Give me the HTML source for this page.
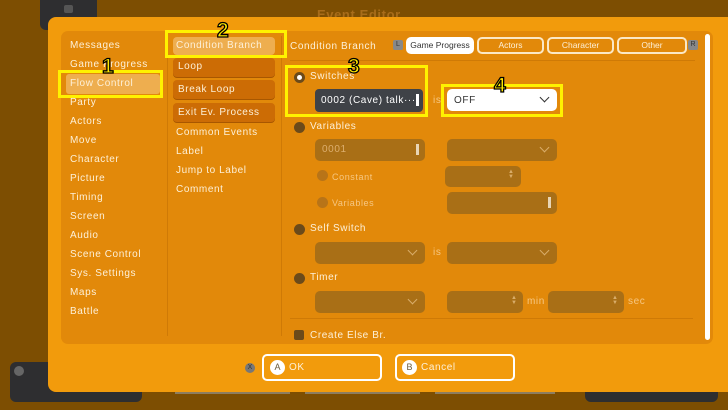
<!DOCTYPE html>
<html><head><meta charset="utf-8"><style>
*{margin:0;padding:0;box-sizing:border-box}
body{width:728px;height:410px;overflow:hidden;background:#7d4e02;font-family:"Liberation Sans",sans-serif;position:relative}
.a{position:absolute}
.t{position:absolute;color:#fdf0d8;font-size:10px;letter-spacing:0.6px;line-height:12px;white-space:nowrap}
.dim{color:#f6c783}
.f{position:absolute;background:#a96f16;border-radius:5px}
.y{position:absolute;border:3px solid #fff200}
.r{position:absolute;width:11px;height:11px;border-radius:50%;background:#6b4a1a}
.chev{position:absolute;width:7px;height:7px;border-right:1.5px solid #d9ad6a;border-bottom:1.5px solid #d9ad6a;transform:rotate(45deg)}
.num{position:absolute;font-weight:bold;font-size:21px;color:#ffe800;-webkit-text-stroke:1.3px #000;line-height:21px}
.tab{position:absolute;top:37px;height:17px;border:2px solid #fbe8c6;border-radius:5px;color:#fdf0d8;font-size:8.5px;text-align:center;line-height:13px}
.btn{position:absolute;border-radius:4px}
.sp{position:absolute;color:#d9ad6a;font-size:6px;line-height:5px}
</style></head><body>
<div class="a" style="left:40px;top:0;width:57px;height:30px;background:#2e2e30;border-radius:0 0 6px 6px"></div>
<div class="a" style="left:64px;top:5px;width:9px;height:8px;background:#555;border-radius:2px"></div>
<div class="a" style="left:10px;top:362px;width:132px;height:40px;background:#2e2e30;border-radius:6px"></div>
<div class="a" style="left:585px;top:362px;width:133px;height:40px;background:#2e2e30;border-radius:6px"></div>
<div class="a" style="left:14px;top:366px;width:10px;height:10px;border-radius:50%;background:#666"></div>
<div class="a" style="left:175px;top:392px;width:115px;height:2px;background:#8d7d60"></div>
<div class="a" style="left:305px;top:392px;width:115px;height:2px;background:#8d7d60"></div>
<div class="a" style="left:435px;top:392px;width:120px;height:2px;background:#8d7d60"></div>
<div class="t" style="left:317px;top:9px;font-size:13px;color:#a86c1a;font-weight:bold">Event Editor</div>
<!-- dialog -->
<div class="a" style="left:48px;top:17px;width:690px;height:375px;background:#f29b0c;border-radius:8px"></div>
<div class="a" style="left:61px;top:31px;width:652px;height:313px;background:#e2890a;border-radius:7px"></div>
<div class="a" style="left:167px;top:36px;width:1px;height:300px;background:#cf7a06"></div>
<div class="a" style="left:281px;top:36px;width:1px;height:300px;background:#cf7a06"></div>
<div class="a" style="left:705px;top:34px;width:5px;height:306px;background:#fff;border-radius:3px"></div>
<!-- left list -->
<div class="a" style="left:66px;top:74px;width:94px;height:20px;background:#eeae4f;border-radius:3px"></div>
<div class="t" style="left:70px;top:40px">Messages</div>
<div class="t" style="left:70px;top:59px">Game Progress</div>
<div class="t" style="left:70px;top:78px">Flow Control</div>
<div class="t" style="left:70px;top:97px">Party</div>
<div class="t" style="left:70px;top:116px">Actors</div>
<div class="t" style="left:70px;top:135px">Move</div>
<div class="t" style="left:70px;top:154px">Character</div>
<div class="t" style="left:70px;top:173px">Picture</div>
<div class="t" style="left:70px;top:192px">Timing</div>
<div class="t" style="left:70px;top:211px">Screen</div>
<div class="t" style="left:70px;top:230px">Audio</div>
<div class="t" style="left:70px;top:249px">Scene Control</div>
<div class="t" style="left:70px;top:268px">Sys. Settings</div>
<div class="t" style="left:70px;top:287px">Maps</div>
<div class="t" style="left:70px;top:306px">Battle</div>
<!-- middle -->
<div class="a" style="left:173px;top:37px;width:102px;height:18px;background:#eeae4f;border-radius:4px"></div>
<div class="btn" style="left:173px;top:58px;width:102px;height:19px;background:#cc6c05;box-shadow:0 1px 0 #a85700"></div>
<div class="btn" style="left:173px;top:80px;width:102px;height:19px;background:#cc6c05;box-shadow:0 1px 0 #a85700"></div>
<div class="btn" style="left:173px;top:103px;width:102px;height:19px;background:#cc6c05;box-shadow:0 1px 0 #a85700"></div>
<div class="t" style="left:176px;top:40px">Condition Branch</div>
<div class="t" style="left:178px;top:61px">Loop</div>
<div class="t" style="left:178px;top:84px">Break Loop</div>
<div class="t" style="left:178px;top:107px">Exit Ev. Process</div>
<div class="t" style="left:176px;top:127px">Common Events</div>
<div class="t" style="left:176px;top:146px">Label</div>
<div class="t" style="left:176px;top:165px">Jump to Label</div>
<div class="t" style="left:176px;top:184px">Comment</div>
<!-- right header -->
<div class="t" style="left:290px;top:41px">Condition Branch</div>
<div class="a" style="left:393px;top:40px;width:10px;height:10px;background:#888;border-radius:2px;color:#333;font-size:7px;text-align:center;line-height:10px">L</div>
<div class="a" style="left:406px;top:37px;width:68px;height:17px;background:#fff;border-radius:5px;color:#333;font-size:8.5px;text-align:center;line-height:17px">Game Progress</div>
<div class="tab" style="left:477px;width:67px">Actors</div>
<div class="tab" style="left:547px;width:67px">Character</div>
<div class="tab" style="left:617px;width:70px">Other</div>
<div class="a" style="left:688px;top:40px;width:10px;height:10px;background:#888;border-radius:2px;color:#333;font-size:7px;text-align:center;line-height:10px">R</div>
<div class="a" style="left:290px;top:60px;width:405px;height:1px;background:#cf7a06"></div>
<!-- switches -->
<div class="r" style="left:294px;top:72px;background:#6b4a1a"></div>
<div class="a" style="left:297px;top:75px;width:5px;height:5px;border-radius:50%;background:#fff"></div>
<div class="t" style="left:310px;top:71px">Switches</div>
<div class="a" style="left:315px;top:89px;width:108px;height:23px;background:#3f4247;border-radius:4px"></div>
<div class="t" style="left:321px;top:95px;color:#fff">0002 (Cave) talk···</div>
<div class="a" style="left:416px;top:94px;width:3px;height:12px;background:#fff"></div>
<div class="t" style="left:433px;top:95px;color:#f6c783">is</div>
<div class="a" style="left:447px;top:89px;width:110px;height:22px;background:#fff;border-radius:5px"></div>
<div class="t" style="left:454px;top:95px;color:#333">OFF</div>
<div class="chev" style="left:541px;top:94px;border-color:#333"></div>
<!-- variables -->
<div class="r" style="left:294px;top:122px"></div>
<div class="t" style="left:310px;top:121px">Variables</div>
<div class="f" style="left:315px;top:139px;width:110px;height:22px"></div>
<div class="t dim" style="left:322px;top:144px;color:#dcae6e">0001</div>
<div class="a" style="left:416px;top:144px;width:3px;height:11px;background:#e8d5b5"></div>
<div class="f" style="left:447px;top:139px;width:110px;height:22px"></div>
<div class="chev" style="left:541px;top:144px"></div>
<div class="r" style="left:317px;top:170px;background:#b87418"></div>
<div class="t dim" style="left:332px;top:171px;font-size:9px">Constant</div>
<div class="f" style="left:445px;top:166px;width:76px;height:21px"></div>
<div class="sp" style="left:508px;top:170px">▲<br>▼</div>
<div class="r" style="left:317px;top:197px;background:#b87418"></div>
<div class="t dim" style="left:332px;top:197px;font-size:9px">Variables</div>
<div class="f" style="left:447px;top:192px;width:110px;height:22px"></div>
<div class="a" style="left:548px;top:197px;width:3px;height:11px;background:#e8d5b5"></div>
<!-- self switch -->
<div class="r" style="left:294px;top:224px"></div>
<div class="t" style="left:310px;top:223px">Self Switch</div>
<div class="f" style="left:315px;top:242px;width:110px;height:22px"></div>
<div class="chev" style="left:409px;top:247px"></div>
<div class="t dim" style="left:433px;top:247px">is</div>
<div class="f" style="left:447px;top:242px;width:110px;height:22px"></div>
<div class="chev" style="left:541px;top:247px"></div>
<!-- timer -->
<div class="r" style="left:294px;top:273px"></div>
<div class="t" style="left:310px;top:272px">Timer</div>
<div class="f" style="left:315px;top:291px;width:110px;height:22px"></div>
<div class="chev" style="left:409px;top:296px"></div>
<div class="f" style="left:447px;top:291px;width:76px;height:22px"></div>
<div class="sp" style="left:511px;top:296px">▲<br>▼</div>
<div class="t dim" style="left:527px;top:296px">min</div>
<div class="f" style="left:548px;top:291px;width:76px;height:22px"></div>
<div class="sp" style="left:612px;top:296px">▲<br>▼</div>
<div class="t dim" style="left:628px;top:296px">sec</div>
<div class="a" style="left:290px;top:318px;width:403px;height:1px;background:#cf7a06"></div>
<div class="a" style="left:294px;top:330px;width:10px;height:10px;background:#6b4a1a;border-radius:2px"></div>
<div class="t" style="left:310px;top:330px">Create Else Br.</div>
<!-- buttons -->
<div class="a" style="left:245px;top:363px;width:10px;height:10px;border-radius:50%;background:#777;color:#333;font-size:7px;text-align:center;line-height:10px">X</div>
<div class="a" style="left:262px;top:354px;width:120px;height:27px;border:2px solid #fff;border-radius:5px"></div>
<div class="a" style="left:270px;top:360px;width:15px;height:15px;border-radius:50%;background:#fff;color:#6b5a3a;font-size:9px;text-align:center;line-height:15px">A</div>
<div class="t" style="left:289px;top:362px">OK</div>
<div class="a" style="left:395px;top:354px;width:120px;height:27px;border:2px solid #fff;border-radius:5px"></div>
<div class="a" style="left:402px;top:360px;width:15px;height:15px;border-radius:50%;background:#fff;color:#6b5a3a;font-size:9px;text-align:center;line-height:15px">B</div>
<div class="t" style="left:421px;top:362px">Cancel</div>
<!-- yellow annotation boxes -->
<div class="y" style="left:58px;top:70px;width:105px;height:28px"></div>
<div class="y" style="left:165px;top:30px;width:122px;height:28px"></div>
<div class="y" style="left:285px;top:65px;width:143px;height:52px"></div>
<div class="y" style="left:441px;top:84px;width:122px;height:33px"></div>
<div class="num" style="left:102px;top:56px">1</div>
<div class="num" style="left:217px;top:20px">2</div>
<div class="num" style="left:348px;top:56px">3</div>
<div class="num" style="left:494px;top:75px">4</div>
</body></html>
